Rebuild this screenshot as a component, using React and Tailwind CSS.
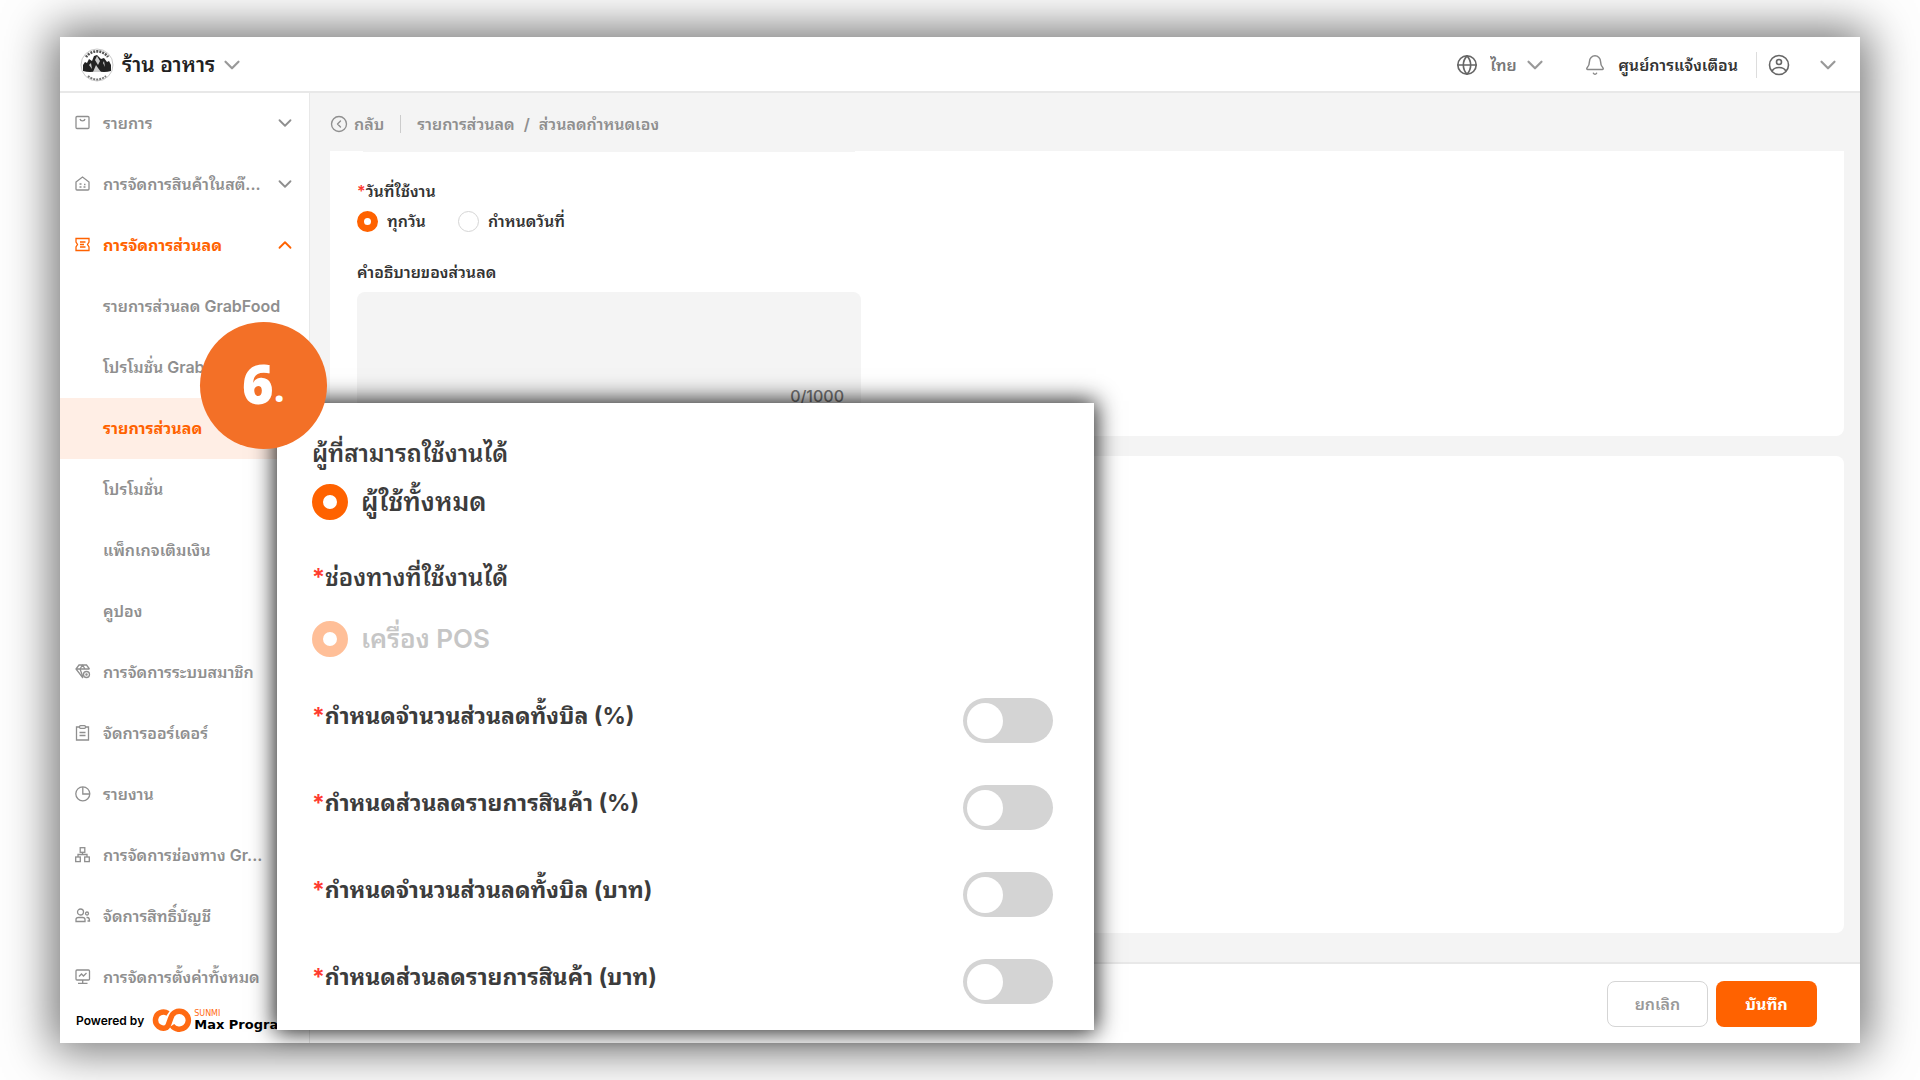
import React from 'react';
import { ChevronDown, ChevronUp, Globe, Bell, CircleChevronLeft } from 'lucide-react';

const menu = [
  { label: 'รายการ', icon: 'bag', arrow: 'down' },
  { label: 'การจัดการสินค้าในสต๊...', icon: 'store', arrow: 'down' },
  { label: 'การจัดการส่วนลด', icon: 'ticket', arrow: 'up', open: true },
  { label: 'รายการส่วนลด GrabFood' },
  { label: 'โปรโมชั่น GrabFood' },
  { label: 'รายการส่วนลด', active: true },
  { label: 'โปรโมชั่น' },
  { label: 'แพ็กเกจเติมเงิน' },
  { label: 'คูปอง' },
  { label: 'การจัดการระบบสมาชิก', icon: 'diamond' },
  { label: 'จัดการออร์เดอร์', icon: 'clipboard' },
  { label: 'รายงาน', icon: 'pie' },
  { label: 'การจัดการช่องทาง Gr...', icon: 'network' },
  { label: 'จัดการสิทธิ์บัญชี', icon: 'users' },
  { label: 'การจัดการตั้งค่าทั้งหมด', icon: 'monitor' },
];

const discounts = [
  'กำหนดจำนวนส่วนลดทั้งบิล (%)',
  'กำหนดส่วนลดรายการสินค้า (%)',
  'กำหนดจำนวนส่วนลดทั้งบิล (บาท)',
  'กำหนดส่วนลดรายการสินค้า (บาท)',
];

export default function App() {
  return (
    <div className="min-h-screen px-[60px] py-[37px] bg-[#fefefe] overflow-hidden font-['Inter','Noto_Sans_Thai_Looped','Loma','Garuda','Noto_Sans_Thai',sans-serif]">
      <div className="relative flex flex-col bg-white shadow-[0_0_44px_8px_rgba(0,0,0,0.55)]">
        <Header />
        <div className="flex flex-1">
          <Sidebar />
          <main className="flex flex-col flex-1 min-w-0 bg-[#f4f4f4]">
            <Breadcrumb />
            <div className="flex flex-col flex-1 gap-5 pl-5 pr-4 pb-[29px]">
              <DiscountForm />
              <section className="flex-1 bg-white rounded-lg" />
            </div>
            <footer className="flex items-center justify-end gap-2 h-[81px] pr-[43px] bg-white border-t-2 border-[#e8e8e8]">
              <button className="w-[101px] h-[46px] rounded-lg border border-[#d5d5d5] text-base font-semibold text-[#999]">ยกเลิก</button>
              <button className="w-[101px] h-[46px] rounded-lg bg-[#ff6200] text-base font-bold text-white">บันทึก</button>
            </footer>
          </main>
        </div>
        <ChannelPanel />
        <div className="absolute left-[140px] top-[285px] flex items-center justify-center w-[127px] h-[127px] pb-1.5 rounded-full bg-[#f37027] text-white font-['Open_Sans',sans-serif]">
          <span className="text-[54px] leading-none font-extrabold">6</span>
          <span className="pt-2 text-[40px] leading-none font-bold">.</span>
        </div>
      </div>
    </div>
  );
}

const Header = () => (
  <header className="flex items-center h-14 pt-0.5 pl-5 pr-[19px] border-b-2 border-[#e8e8e8]">
    <button className="flex items-center text-[21px] font-semibold text-[#222]">
      <ShopLogo />
      <span className="ml-2 mr-1">ร้าน อาหาร</span>
      <ChevronDown size={26} className="text-[#999]" />
    </button>
    <div className="flex items-center ml-auto text-base">
      <Globe size={22} strokeWidth={1.8} className="text-[#666]" />
      <select aria-label="ภาษา" className="appearance-none ml-3 w-8 font-semibold text-[#777]">
        <option>ไทย</option>
      </select>
      <ChevronDown size={26} className="text-[#999]" />
      <button className="flex items-center gap-3 ml-9 font-semibold text-[#333]">
        <Bell size={22} strokeWidth={1.6} className="text-[#888]" />
        ศูนย์การแจ้งเตือน
      </button>
      <button aria-label="บัญชี" className="flex items-center gap-6 ml-[18px] pl-2.5 border-l border-[#ddd]">
        <UserIcon />
        <ChevronDown size={26} className="text-[#999]" />
      </button>
    </div>
  </header>
);

const UserIcon = () => (
  <svg width="24" height="24" viewBox="0 0 24 24" fill="none" stroke="#666" strokeWidth="1.6">
    <circle cx="12" cy="12" r="9.500" />
    <circle cx="12" cy="9" r="2.500" />
    <path d="M5 18.500 Q6.500 14.500 12 14.500 Q17.500 14.500 19 18.500" />
  </svg>
);

const Sidebar = () => (
  <nav className="flex flex-col w-[250px] shrink-0 border-r border-[#e8e8e8]">
    {menu.map((item) => (
      <MenuItem key={item.label} {...item} />
    ))}
    <div className="flex items-center h-[35px] pb-2.5 pl-4 whitespace-nowrap font-['Inter'] text-xs font-semibold text-black">
      Powered by
      <MaxLogo />
      <div className="text-[13px] leading-3.5 font-bold font-['DejaVu_Sans',sans-serif]">
        <div className="text-[8px] leading-2 font-normal text-[#ff6a13]">SUNMI</div>
        Max Program
      </div>
    </div>
  </nav>
);

const MenuItem = ({ label, icon, arrow, open, active }) => {
  let tone = 'text-[#8f8f8f] font-semibold';
  if (open) tone = 'text-[#ff6200] font-bold';
  if (active) tone = 'text-[#ff6200] font-bold bg-[#ffeee5]';

  return (
    <a href="#" className={`flex items-center h-[61px] pb-px pl-[15px] pr-[13px] text-base ${tone}`}>
      <span className="w-7 shrink-0">{icon && <MenuIcon name={icon} />}</span>
      <span className="flex-1 whitespace-nowrap">{label}</span>
      {arrow === 'down' && <ChevronDown size={22} className="shrink-0" />}
      {arrow === 'up' && <ChevronUp size={22} className="shrink-0" />}
    </a>
  );
};

const Breadcrumb = () => (
  <div className="flex items-center h-[58px] pt-1 pl-5 text-base font-semibold text-[#8f8f8f]">
    <button className="flex items-center gap-1.5 pr-4 border-r border-[#ccc] leading-4">
      <CircleChevronLeft size={18} strokeWidth={1.8} />
      กลับ
    </button>
    <a href="#" className="ml-4">รายการส่วนลด</a>
    <span className="mx-[9px]">/</span>
    <span>ส่วนลดกำหนดเอง</span>
  </div>
);

const Radio = ({ name, label, ...rest }) => (
  <label className="flex items-center gap-[9px]">
    <input
      type="radio"
      name={name}
      className="appearance-none w-[21px] h-[21px] rounded-full border border-[#d5d5d5] bg-white checked:border-7 checked:border-[#ff6200]"
      {...rest}
    />
    {label}
  </label>
);

const DiscountForm = () => (
  <section className="h-[285px] px-[27px] bg-white rounded-b-lg text-base font-semibold text-[#333]">
    <div className="w-[504px] h-0.5 px-1.5">
      <div className="h-px bg-[#f4f4f4]" />
    </div>
    <fieldset className="pt-6">
      <legend className="float-left w-full leading-7">
        <span className="text-[#ff3b30]">*</span>วันที่ใช้งาน
      </legend>
      <div className="flex gap-8 pt-1 clear-both">
        <Radio name="date" label="ทุกวัน" defaultChecked />
        <Radio name="date" label="กำหนดวันที่" />
      </div>
    </fieldset>
    <label htmlFor="desc" className="block pt-[27px] pb-2">คำอธิบายของส่วนลด</label>
    <div className="relative w-[504px]">
      <textarea id="desc" className="block w-full h-[118px] rounded-lg bg-[#f4f4f4] resize-none" />
      <span className="absolute right-[17px] bottom-0.5 font-medium text-[#777]">0/1000</span>
    </div>
  </section>
);

const PanelRadio = ({ label, ...rest }) => (
  <label className="flex items-center gap-[13px] text-[26px] leading-10 has-disabled:text-[#c6c6c6]">
    <input
      type="radio"
      className="appearance-none w-9 h-9 rounded-full bg-white border-11 border-[#ff6200] disabled:opacity-40"
      {...rest}
    />
    {label}
  </label>
);

const ChannelPanel = () => (
  <section className="absolute left-[217px] top-[366px] w-[817px] h-[627px] pl-[35px] pr-[41px] pt-[33px] bg-white shadow-[0_0_22px_2px_rgba(0,0,0,0.9)] text-2xl font-semibold text-[#3c3c3c]">
    <h2 className="leading-9">ผู้ที่สามารถใช้งานได้</h2>
    <div className="pt-[10px]">
      <PanelRadio name="audience" label="ผู้ใช้ทั้งหมด" defaultChecked />
    </div>
    <h2 className="pt-[38px] leading-9"><Star />ช่องทางที่ใช้งานได้</h2>
    <div className="pt-[23px]">
      <PanelRadio name="channel" label="เครื่อง POS" defaultChecked disabled />
    </div>
    <div className="pt-[18px] text-[23px] font-bold">
      {discounts.map((text) => (
        <label key={text} className="flex items-center justify-between h-[87px]">
          <span className="pb-2"><Star />{text}</span>
          <input
            type="checkbox"
            role="switch"
            className="appearance-none flex items-center w-[90px] h-[45px] pl-1 rounded-full bg-[#d4d4d4] before:content-[''] before:w-9 before:h-9 before:rounded-full before:bg-white"
          />
        </label>
      ))}
    </div>
  </section>
);

const Star = () => <span className="text-[#ff3b30]">*</span>;

const ShopLogo = () => (
  <svg width="34" height="34" viewBox="0 0 34 34" fill="none">
    <circle cx="17" cy="17" r="16" stroke="#bbb" strokeWidth="0.8" />
    <path d="M6 9 A13.5 13.5 0 0 1 28 9" stroke="#555" strokeWidth="2.6" strokeDasharray="2 1" />
    <path d="M8 28 A13.5 13.5 0 0 0 26 28" stroke="#777" strokeWidth="2" strokeDasharray="2 1" />
    <path d="M3 23 V17 L5 14 L7 15 L9 11 L12 13 L14 8 L17 7 L21 11 L24 10 L27 14 L29 13 L31 17 V23 Q24 25 17 23 Q10 25 3 23 Z" fill="#222" />
    <path d="M15 12 L17 8 L20 13 L18 17 Z M13 24 L16 17 L18 20 L21 24 Z M9 17 L11 15 L12 21 Z M23 15 L25 19 L24 13 Z" fill="#ccc" />
  </svg>
);

const MaxLogo = () => (
  <svg width="40" height="25" viewBox="0 0 40 25" fill="none" className="ml-2 mr-0.5 shrink-0">
    <path d="M16 5.500 A8 8 0 1 0 14.500 19.500 C17.500 17 17.500 11 20.500 6.500 A9 9 0 1 1 20 17.500" stroke="#ff6a13" strokeWidth="5.500" />
  </svg>
);

const iconPaths = {
  bag: <><rect x="1" y="1.5" width="13" height="12" rx="1" /><path d="M5 4 C5.500 6.500 9.500 6.500 10 4" /></>,
  store: <><path d="M1 6 L7.500 1 L14 6 V13 Q14 14 13 14 H2 Q1 14 1 13 Z" /><path d="M4.500 8 H6.500 M4.500 11 H6.500 M8.500 11 H10.500 M9 8.500 H10.500" strokeWidth="1.6" /></>,
  ticket: <><path d="M1 1.500 H14 V5 L12.500 7.500 L14 10 V13.500 H1 V10 L2.500 7.500 L1 5 Z" /><path d="M5 5 H10.500 M5 7.500 H9 M5 10 H10.500" /></>,
  diamond: <><path d="M8 14 L1 5 L4 1 H11.500 L14.500 5 M1 5 H14.500 M5 5 L8 13 M5 5 L7.500 1 L10 5" /><circle cx="11.500" cy="10.500" r="3" /><circle cx="11.500" cy="10.500" r="0.6" /></>,
  clipboard: <><path d="M4.500 2 H1.500 V15 H13.500 V2 H10.500" /><rect x="4.500" y="0.700" width="6" height="2.600" rx="1" /><path d="M4.500 7.500 H10.500 M4.500 10.500 H10.500" /></>,
  pie: <><circle cx="7.800" cy="7.800" r="7" /><path d="M7.800 1 V8 H14.500" /></>,
  network: <><rect x="5.200" y="0.700" width="4.600" height="4.600" /><rect x="0.700" y="10" width="4.600" height="4.600" /><rect x="9.700" y="10" width="4.600" height="4.600" /><path d="M7.500 5.300 V7.500 M3 10 V7.500 H12 V10" /></>,
  users: <><circle cx="5.500" cy="4" r="3" /><path d="M1 13.500 V11.500 Q1 9.500 3.500 9.500 H7.500 Q10 9.500 10 11.500 V13.500 Z" /><circle cx="12" cy="5.500" r="1.500" /><path d="M11.500 9.500 H12.500 Q14.500 9.500 14.500 13 H12.500" /></>,
  monitor: <><rect x="1" y="1" width="13.500" height="10" rx="1" /><path d="M4 7.500 L6.500 5 L8.500 7 L11.500 4 M3 14.300 H12.500 M7.700 11 V14" /></>,
};

const MenuIcon = ({ name }) => (
  <svg width="16" height="16" viewBox="0 0 16 16" fill="none" stroke="currentColor" strokeWidth="1.3">
    {iconPaths[name]}
  </svg>
);
